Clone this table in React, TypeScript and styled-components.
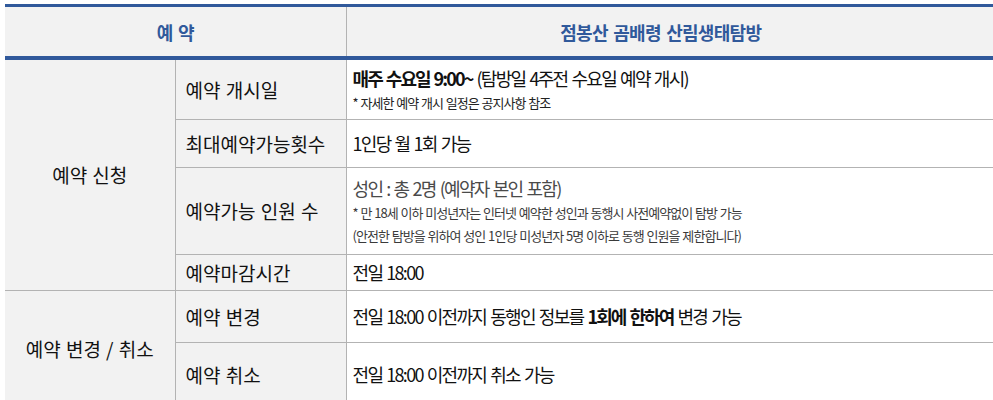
import styled, { createGlobalStyle } from "styled-components";

const Global = createGlobalStyle`
  html, body {
    margin: 0;
    padding: 0;
    background: #ffffff;
  }
  body {
    font-family: "Noto Sans CJK KR", "Noto Sans", sans-serif;
    color: #111111;
  }
`;

const blue = "#30599b";
const line = "#b3b3b3";
const shade = "#f2f2f2";

const Page = styled.div`
  padding: 4px 0 0 5px;
  overflow: hidden;
`;

const Table = styled.table`
  width: 1000px;
  border-collapse: collapse;
  table-layout: fixed;
`;

const HeadCell = styled.th<{ $shift?: number }>`
  height: 49px;
  padding: 0 ${(p) => p.$shift ?? 0}px 0 0;
  background: ${shade};
  border-top: 3px solid ${blue};
  border-bottom: 4px solid ${blue};
  border-left: 1px solid ${line};
  color: ${blue};
  font-size: 18px;
  font-weight: 700;
  letter-spacing: -0.7px;
  word-spacing: 2px;
  text-align: center;
  &:first-child {
    border-left: none;
  }
`;

const Row = styled.tr<{ $h: number }>`
  height: ${(p) => p.$h}px;
`;

const GroupCell = styled.td`
  background: ${shade};
  border-bottom: 1px solid ${line};
  border-right: 1px solid ${line};
  text-align: center;
  vertical-align: middle;
  font-size: 19px;
  word-spacing: 1px;
  padding: 0;
`;

const LabelCell = styled.td`
  background: ${shade};
  border: 1px solid ${line};
  border-top: none;
  padding: 0 0 0 10px;
  vertical-align: middle;
  font-size: 19px;
  word-spacing: 1px;
  white-space: nowrap;
`;

const ValueCell = styled.td<{ $tone?: string }>`
  background: #ffffff;
  border-bottom: 1px solid ${line};
  padding: 0 0 0 6px;
  vertical-align: middle;
  color: ${(p) => p.$tone ?? "#111111"};
  font-size: 18px;
  letter-spacing: -1.7px;
  word-spacing: 1.7px;
  white-space: nowrap;
`;

const Main = styled.div`
  line-height: 26px;
`;

const Note = styled.div<{ $tone?: string }>`
  font-size: 13px;
  line-height: 23px;
  letter-spacing: -0.95px;
  word-spacing: 0.8px;
  color: ${(p) => p.$tone ?? "#222222"};
`;

const Strong = styled.b`
  font-weight: 700;
  letter-spacing: -1.9px;
`;

export default function App() {
  return (
    <>
      <Global />
      <Page>
        <Table>
          <colgroup>
            <col style={{ width: 170 }} />
            <col style={{ width: 171 }} />
            <col />
          </colgroup>
          <thead>
            <tr>
              <HeadCell colSpan={2}>예 약</HeadCell>
              <HeadCell $shift={30}>점봉산 곰배령 산림생태탐방</HeadCell>
            </tr>
          </thead>
          <tbody>
            <Row $h={61}>
              <GroupCell rowSpan={4}>예약 신청</GroupCell>
              <LabelCell>예약 개시일</LabelCell>
              <ValueCell>
                <Main>
                  <Strong>매주 수요일 9:00~</Strong> (탐방일 4주전 수요일 예약 개시)
                </Main>
                <Note>* 자세한 예약 개시 일정은 공지사항 참조</Note>
              </ValueCell>
            </Row>
            <Row $h={48}>
              <LabelCell>최대예약가능횟수</LabelCell>
              <ValueCell>1인당 월 1회 가능</ValueCell>
            </Row>
            <Row $h={87}>
              <LabelCell>예약가능 인원 수</LabelCell>
              <ValueCell $tone="#4a4a4a">
                <Main>성인 : 총 2명 (예약자 본인 포함)</Main>
                <Note $tone="#3a3a3a">
                  * 만 18세 이하 미성년자는 인터넷 예약한 성인과 동행시 사전예약없이 탐방 가능
                </Note>
                <Note $tone="#3a3a3a">
                  (안전한 탐방을 위하여 성인 1인당 미성년자 5명 이하로 동행 인원을 제한합니다)
                </Note>
              </ValueCell>
            </Row>
            <Row $h={36}>
              <LabelCell>예약마감시간</LabelCell>
              <ValueCell>전일 18:00</ValueCell>
            </Row>
            <Row $h={52}>
              <GroupCell rowSpan={2}>예약 변경 / 취소</GroupCell>
              <LabelCell>예약 변경</LabelCell>
              <ValueCell>
                전일 18:00 이전까지 동행인 정보를 <Strong>1회에 한하여</Strong> 변경 가능
              </ValueCell>
            </Row>
            <Row $h={64}>
              <LabelCell>예약 취소</LabelCell>
              <ValueCell>전일 18:00 이전까지 취소 가능</ValueCell>
            </Row>
          </tbody>
        </Table>
      </Page>
    </>
  );
}
